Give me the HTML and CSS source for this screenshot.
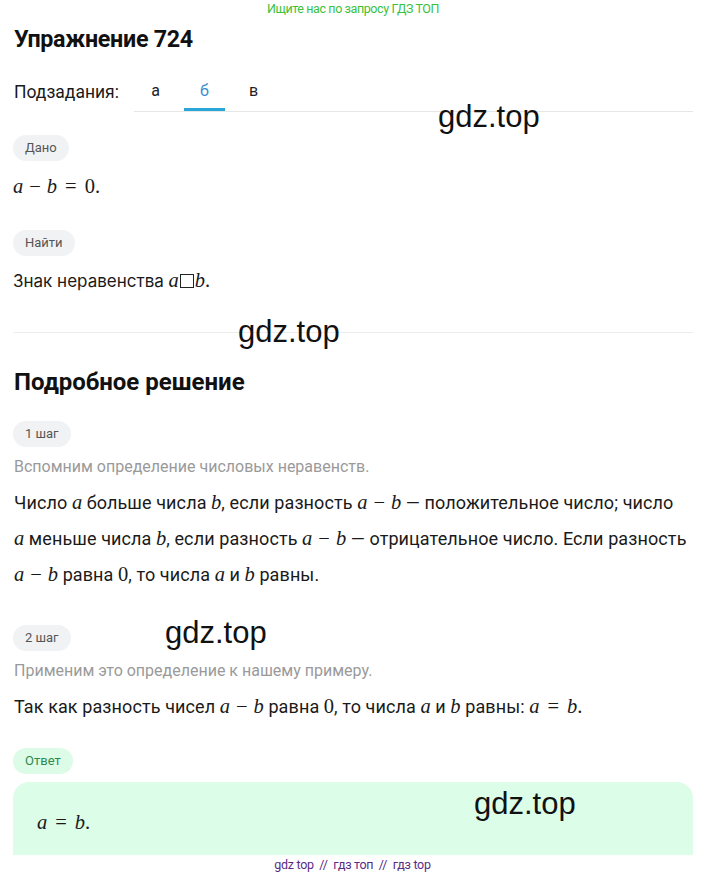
FILE: index.html
```html
<!DOCTYPE html>
<html lang="ru">
<head>
<meta charset="utf-8">
<link rel="stylesheet" href="styles.css">
</head>
<body>
<div class="page">
  <div class="banner">Ищите нас по запросу ГДЗ ТОП</div>
  <h1 class="title">Упражнение 724</h1>
  <div class="subtasks">
    <span class="sub-label">Подзадания:</span>
    <div class="tabs">
      <span class="tab">а</span>
      <span class="tab active">б</span>
      <span class="tab">в</span>
    </div>
  </div>

  <div class="pill first">Дано</div>
  <p class="text given"><span class="m"><i>a</i><span class="op">−</span><i>b</i><span class="rel">=</span>0.</span></p>

  <div class="pill">Найти</div>
  <p class="text find">Знак неравенства <span class="m"><i>a</i><span class="box"></span><i>b</i>.</span></p>

  <hr class="sep">

  <h2 class="heading">Подробное решение</h2>

  <div class="pill step1">1 шаг</div>
  <p class="hint">Вспомним определение числовых неравенств.</p>
  <p class="text para">Число <span class="m"><i>a</i></span> больше числа <span class="m"><i>b</i></span>, если разность <span class="m"><i>a</i><span class="op">−</span><i>b</i></span> — положительное число; число <span class="m"><i>a</i></span>&nbsp;меньше числа <span class="m"><i>b</i></span>, если разность <span class="m"><i>a</i><span class="op">−</span><i>b</i></span> — отрицательное число. Если разность <span class="m"><i>a</i><span class="op">−</span><i>b</i></span> равна <span class="m">0</span>, то числа <span class="m"><i>a</i></span> и <span class="m"><i>b</i></span> равны.</p>

  <div class="pill step2">2 шаг</div>
  <p class="hint">Применим это определение к нашему примеру.</p>
  <p class="text para">Так как разность чисел <span class="m"><i>a</i><span class="op">−</span><i>b</i></span> равна <span class="m">0</span>, то числа <span class="m"><i>a</i></span> и <span class="m"><i>b</i></span> равны: <span class="m"><i>a</i><span class="rel">=</span><i>b</i>.</span></p>

  <div class="pill green">Ответ</div>
  <div class="answer"><span class="m"><i>a</i><span class="rel">=</span><i>b</i>.</span></div>

  <div class="footer">gdz top &nbsp;//&nbsp; гдз топ &nbsp;//&nbsp; гдз top</div>

  <span class="wm wm1">gdz.top</span>
  <span class="wm wm2">gdz.top</span>
  <span class="wm wm3">gdz.top</span>
  <span class="wm wm4">gdz.top</span>
</div>
</body>
</html>
```

FILE: styles.css
```css
* { box-sizing: border-box; }
html, body { margin: 0; padding: 0; background: #fff; }
body { font-family: Inter, Roboto, "Noto Sans", sans-serif; color: #1a1a1a; }
.page { position: relative; width: 705px; height: 877px; overflow: hidden; padding: 0 12px 0 13px; }

.banner { text-align: center; font-family: Roboto, sans-serif; font-size: 12.5px; color: #3cc13c; letter-spacing: -0.4px; padding-top: 1px; height: 16px; line-height: 16px; }

.title { margin: 10px 0 0 1px; font-family: Roboto, sans-serif; font-weight: 700; font-size: 23.3px; letter-spacing: -0.3px; line-height: 26px; color: #111; }

.subtasks { display: flex; align-items: flex-end; margin-top: 19px; height: 41px; }
.sub-label { font-family: Roboto, sans-serif; font-size: 17.5px; width: 121px; padding: 0 0 9px 1px; line-height: 22px; }
.tabs { flex: 1; display: flex; border-bottom: 1px solid #e6e6e6; height: 41px; }
.tab { width: 49px; text-align: center; font-size: 16px; line-height: 20px; padding-top: 10px; color: #222; font-family: Roboto, sans-serif; }
.tab:first-child { margin-left: -3px; }
.tab.active { color: #3b8fd0; border-bottom: 3px solid #2aa6d9; width: 41px; margin: 0 4px; }

.pill { display: inline-block; background: #f1f2f4; color: #555; border-radius: 13px; font-size: 13px; height: 26px; line-height: 26px; padding: 0 12px; font-family: Roboto, sans-serif; }
.pill.first { margin-top: 23px; }
.pill.green { background: #dcfce8; color: #2f8a4f; margin-top: 23px; }

.text { margin: 0; font-size: 17px; line-height: 36px; color: #1a1a1a; }
.given { margin-top: 8px; margin-bottom: 25px; }
.find { margin-top: 7px; }

.m { font-family: "Liberation Serif", "DejaVu Serif", serif; font-size: 20.5px; line-height: 20px; white-space: nowrap; letter-spacing: 0; }
.m i { font-style: italic; }
.op { margin: 0 6px; }
.rel { margin: 0 8px; }
.box { display: inline-block; width: 14px; height: 14px; border: 1.2px solid #222; vertical-align: -1px; margin: 0 1px; }

.sep { border: 0; border-top: 1px solid #ececec; margin: 33px 0 0 1px; }

.heading { margin: 36px 0 0 1px; font-family: Roboto, sans-serif; font-weight: 700; font-size: 24px; letter-spacing: 0; line-height: 26px; color: #111; }
.pill.step1 { margin-top: 26px; }

.hint { margin: 8px 0 0 1px; font-size: 16px; color: #9a9a9a; line-height: 24px; font-family: Roboto, sans-serif; }
.para { margin-top: 6px; margin-left: 1px; font-family: Roboto, sans-serif; font-size: 18px; letter-spacing: 0.1px; }
.step2 { margin-top: 32px; }

.answer { margin-top: 8px; background: #dcfde8; border-radius: 16px; height: 110px; padding: 26px 0 0 24px; line-height: 30px; }

.footer { position: absolute; left: 0; right: 0; top: 855px; height: 22px; background: #fff; text-align: center; font-family: Roboto, sans-serif; font-size: 12.5px; color: #5a2d85; letter-spacing: -0.3px; line-height: 20px; }

.wm { position: absolute; font-family: "Liberation Sans", Arial, sans-serif; font-size: 31px; color: #111; line-height: 34px; }
.wm1 { left: 438px; top: 100px; }
.wm2 { left: 238px; top: 315px; }
.wm3 { left: 165px; top: 616px; }
.wm4 { left: 474px; top: 787px; }
```
